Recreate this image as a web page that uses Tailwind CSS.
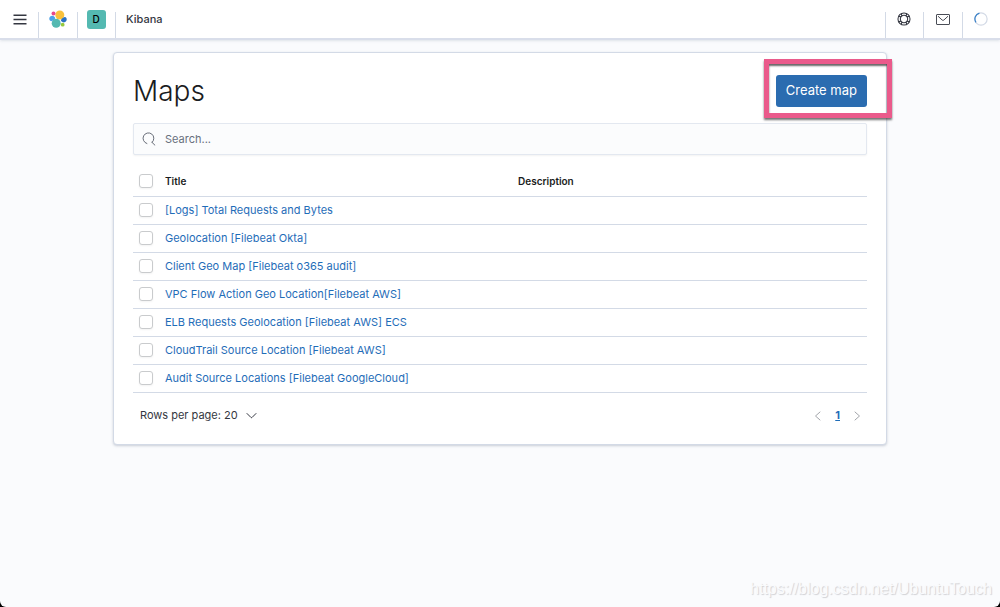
<!DOCTYPE html>
<html lang="en">
<head>
    <meta charset="UTF-8">
    <meta name="viewport" content="width=device-width, initial-scale=1.0">
    <title>Maps - Kibana</title>
    <script src="https://cdn.jsdelivr.net/npm/@tailwindcss/browser@4"></script>
</head>
<body class="bg-black font-['Inter',sans-serif] text-[#343741]">
    <div class="relative min-h-screen bg-[#fafbfd] rounded-b-md">

        <!-- Top bar -->
        <header class="flex items-stretch h-10 bg-white border-b-2 border-[#d9deea] shadow-sm shadow-[#98a2b3]/20">
            <button class="w-[39px] flex items-center justify-center" aria-label="Toggle navigation">
                <svg class="w-[14px] h-[14px]" viewBox="0 0 14 14" stroke="#343741" stroke-width="1.5"><path d="M.5 3.300h13M.5 7.500h13M.5 11.700h13"/></svg>
            </button>
            <a href="#" class="relative w-[39px] -ml-px flex items-center justify-center before:absolute before:left-0 before:top-3 before:bottom-0 before:w-px before:bg-[#d3dae6]" aria-label="Elastic home">
                <svg class="w-[18px] h-[18px]" viewBox="0 0 20 20">
                    <circle cx="12" cy="5.500" r="5" fill="#f9c13c"/>
                    <circle cx="5" cy="4" r="2.200" fill="#e8488b"/>
                    <path d="M.3 9.800c0-2.200 1.600-3.600 3.500-3.500 1.400 0 2.700 1.200 3.200 2.600-.8 2-2.500 3.300-4.600 3.600C1 12.200.3 11.200.3 9.800z" fill="#4da1e8"/>
                    <circle cx="8" cy="14.700" r="5" fill="#54b9b1"/>
                    <path d="M19.700 10.400c0 2.200-1.500 3.500-3.400 3.400-1.400-.1-2.700-1-3.200-2.300.8-2 2.400-3.500 4.500-3.800 1.300.3 2.100 1.300 2.100 2.700z" fill="#2a72c4"/>
                    <circle cx="15.200" cy="16.300" r="2.100" fill="#95c93d"/>
                </svg>
            </a>
            <button class="relative w-[38px] flex items-center justify-center before:absolute before:left-0 before:top-3 before:bottom-0 before:w-px before:bg-[#d3dae6]">
                <span class="w-[19px] h-[19px] rounded-[3px] bg-[#54b9b1] text-black text-[10px] font-medium flex items-center justify-center">D</span>
            </button>
            <nav class="relative flex-1 flex items-center pl-[11px] text-[11px] font-medium before:absolute before:left-0 before:top-3 before:bottom-0 before:w-px before:bg-[#d3dae6]">Kibana</nav>
            <button class="relative w-[38px] flex items-center justify-center before:absolute before:left-0 before:top-3 before:bottom-0 before:w-px before:bg-[#d3dae6]" aria-label="Help">
                <svg class="w-[14px] h-[14px]" viewBox="0 0 16 16" fill="none" stroke="#343741" stroke-width="1.2">
                    <circle cx="8" cy="8" r="6.900"/><circle cx="8" cy="8" r="4.200"/>
                    <path d="M5 1.800 5.500 4.600M11 1.800 10.500 4.600M5 14.200 5.500 11.400M11 14.200 10.500 11.400M1.800 5 4.600 5.500M1.800 11 4.600 10.500M14.200 5 11.400 5.500M14.200 11 11.400 10.500"/>
                </svg>
            </button>
            <button class="relative w-[39px] flex items-center justify-center before:absolute before:left-0 before:top-3 before:bottom-0 before:w-px before:bg-[#d3dae6]" aria-label="Newsfeed">
                <svg class="w-[14px] h-[14px]" viewBox="0 0 14 14" fill="none" stroke="#4a4d56">
                    <rect x=".5" y="2.500" width="13" height="10" rx=".5"/><path d="m2 4.200 4.200 3.900c.5.400 1.100.4 1.600 0L12 4.200"/>
                </svg>
            </button>
            <div class="relative w-[38px] flex items-center justify-center before:absolute before:left-0 before:top-3 before:bottom-0 before:w-px before:bg-[#d3dae6]" role="status" aria-label="Loading">
                <svg class="w-[14px] h-[14px]" viewBox="0 0 16 16" fill="none" stroke-width="1.400">
                    <circle cx="8" cy="8" r="7" stroke="#d3dae6"/><path d="M2.200 11.800A7 7 0 0 1 6.200 1.200" stroke="#3b82c8"/>
                </svg>
            </div>
        </header>

        <!-- Map list -->
        <main class="max-w-[774px] mx-auto mt-3 px-[19px] pt-5 pb-[14px] bg-white border border-[#d3dae6] rounded shadow-sm shadow-[#98a2b3]/40">
            <div class="flex items-center justify-between h-9">
                <h1 class="text-[28px] font-light text-[#1a1c21]">Maps</h1>
                <div class="relative">
                    <button class="block h-8 px-[10px] rounded-[3px] bg-[#2b6cb0] text-white text-[13px]">Create map</button>
                    <div class="absolute -top-4 -left-3 -right-[25px] -bottom-[11px] border-5 border-[#ea5a8b] shadow-[0_2px_2px_rgba(0,0,0,0.55),inset_0_2px_2px_rgba(0,0,0,0.6)] pointer-events-none"></div>
                </div>
            </div>

            <div class="flex items-center h-8 mt-[14px] px-2 gap-[9px] bg-[#fbfcfd] border border-[#e3e8f0] shadow-xs rounded-xs">
                <svg class="w-[14px] h-[14px]" viewBox="0 0 16 16" fill="none" stroke="#535966" stroke-linecap="round"><path d="M5.600 13.200A6.200 6.200 0 1 1 11.500 11.900M11.500 11.900 14.700 15"/></svg>
                <input type="search" aria-label="Search" placeholder="Search..." class="flex-1 text-[11px] outline-none placeholder:text-[#69707d]">
            </div>

            <table class="w-full mt-3 table-fixed text-left text-[11px]">
                <thead>
                    <tr class="h-[29px] border-b border-[#d3dae6] text-[10px] text-[#1a1c21]">
                        <th class="w-8 pl-[6px]"><input type="checkbox" aria-label="Select all rows" class="block appearance-none w-[14px] h-[14px] border border-[#c9cbcd] rounded-[3px] bg-white shadow-xs"></th>
                        <th class="w-[353px] font-semibold">Title</th>
                        <th class="font-semibold">Description</th>
                    </tr>
                </thead>
                <tbody id="rows"></tbody>
            </table>

            <div class="flex items-center justify-between h-7 mt-[9px] px-[6px] text-[11px]">
                <button class="flex items-center gap-2 pl-px">
                    Rows per page: 20
                    <svg class="w-[11px] h-[11px]" viewBox="0 0 11 11" fill="none" stroke="#343741" stroke-linecap="round"><path d="m1 3.500 4 4q.5.400 1 0l4-4"/></svg>
                </button>
                <div class="flex items-center gap-[14px]">
                    <button disabled aria-label="Previous page"><svg class="block w-[7px] h-[10px]" viewBox="0 0 7 10" fill="none" stroke="#a2a5aa" stroke-linecap="round"><path d="M6 1 1.500 5 6 9"/></svg></button>
                    <a href="#" class="font-bold text-[#1f6db8] underline">1</a>
                    <button disabled aria-label="Next page"><svg class="block w-[7px] h-[10px]" viewBox="0 0 7 10" fill="none" stroke="#a2a5aa" stroke-linecap="round"><path d="m1 1 4.500 4L1 9"/></svg></button>
                </div>
            </div>
        </main>

        <p class="absolute right-2 bottom-[6px] font-['Liberation_Sans',sans-serif] text-[16px] text-[#fafbfd] [text-shadow:1px_1px_1px_#d0d0d4]">https://blog.csdn.net/UbuntuTouch</p>
    </div>

    <script>
        const maps = [
            '[Logs] Total Requests and Bytes',
            'Geolocation [Filebeat Okta]',
            'Client Geo Map [Filebeat o365 audit]',
            'VPC Flow Action Geo Location[Filebeat AWS]',
            'ELB Requests Geolocation [Filebeat AWS] ECS',
            'CloudTrail Source Location [Filebeat AWS]',
            'Audit Source Locations [Filebeat GoogleCloud]'
        ];

        // Render one row per saved map
        document.getElementById('rows').innerHTML = maps.map(title => `
            <tr class="h-7 border-b border-[#d3dae6]">
                <td class="pl-[6px]"><input type="checkbox" aria-label="Select ${title}" class="block appearance-none w-[14px] h-[14px] border border-[#c9cbcd] rounded-[3px] bg-white shadow-xs"></td>
                <td><a href="#" class="text-[#1f6db8]">${title}</a></td>
                <td></td>
            </tr>
        `).join('');
    </script>
</body>
</html>
